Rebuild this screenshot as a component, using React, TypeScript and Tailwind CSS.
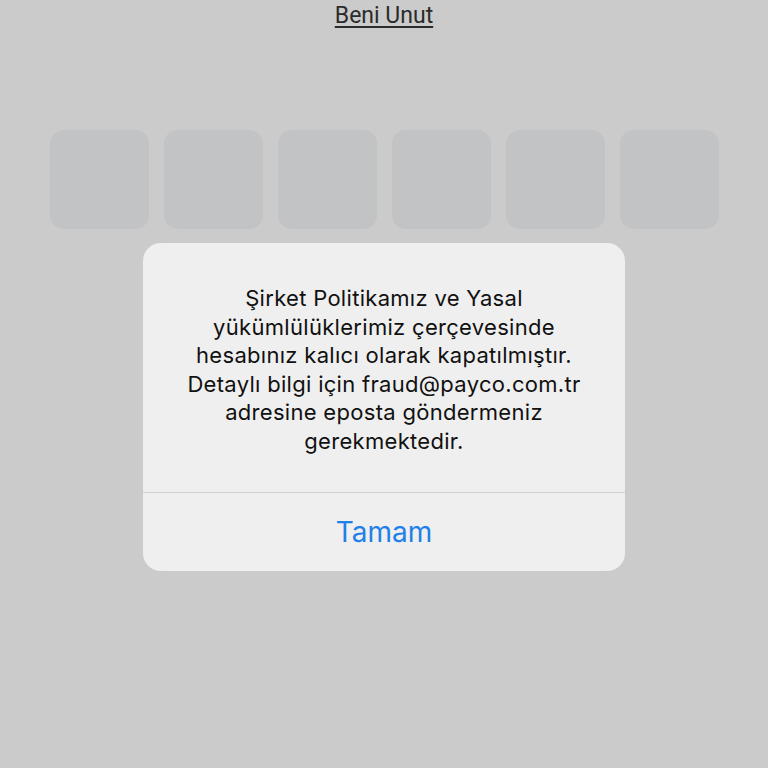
export default function App() {
  const lines = [
    "Şirket Politikamız ve Yasal",
    "yükümlülüklerimiz çerçevesinde",
    "hesabınız kalıcı olarak kapatılmıştır.",
    "Detaylı bilgi için fraud@payco.com.tr",
    "adresine eposta göndermeniz",
    "gerekmektedir.",
  ];
  return (
    <div className="w-[768px] h-[768px] bg-[#cbcbcb] flex flex-col items-center overflow-hidden" style={{ fontFamily: "Inter, 'Noto Sans', sans-serif" }}>
      <div className="pt-[2px] h-[30px] text-[23px] leading-[28px] text-[#2b2b2b] underline underline-offset-[3px] decoration-[1.5px]" style={{ fontFamily: "Roboto, sans-serif" }}>
        Beni Unut
      </div>
      <div className="mt-[100px] flex gap-[15px]">
        {[0, 1, 2, 3, 4, 5].map((i) => (
          <div key={i} className="w-[99px] h-[99px] rounded-[14px] bg-[#c2c3c5]" />
        ))}
      </div>
      <div className="mt-[14px] w-[482px] rounded-[18px] bg-[#efefef] flex flex-col">
        <div className="pt-[41px] pb-[36px] flex flex-col items-center text-[22px] leading-[28.6px] tracking-[0.3px] text-[#111111]">
          {lines.map((l) => (
            <div key={l}>{l}</div>
          ))}
        </div>
        <div className="h-px bg-[#d0d0d0]" />
        <div className="h-[78px] flex items-center justify-center text-[28px] text-[#1e80e8]">
          Tamam
        </div>
      </div>
    </div>
  );
}
